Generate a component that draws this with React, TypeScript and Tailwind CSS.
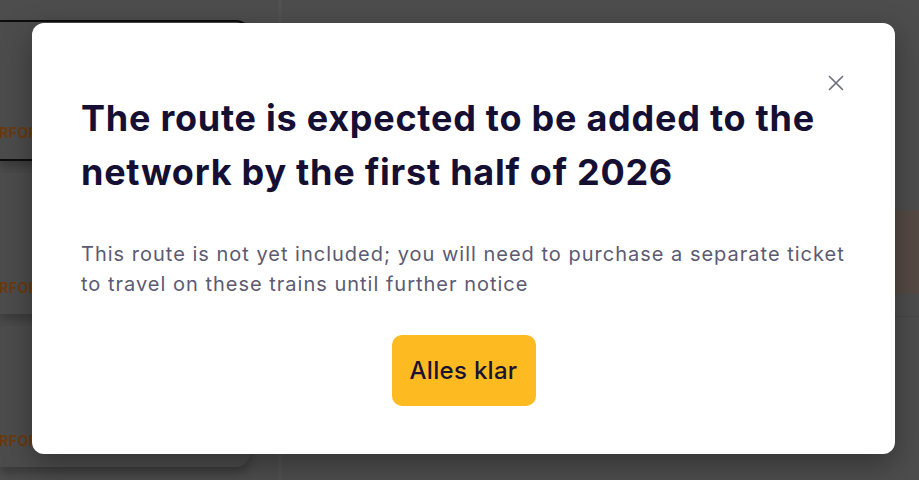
import React from "react";

function Card({ bordered }: { bordered?: boolean }) {
  return (
    <div
      className={`relative h-[141px] w-[250px] rounded-r-[14px] bg-[#989898] shadow-[0_6px_10px_rgba(0,0,0,0.25)] ${
        bordered ? "border-t-2 border-r-2 border-b-2 border-[#1a1a1a]" : ""
      }`}
    >
      <div className="absolute left-0 bottom-[16px] w-[32px] overflow-hidden">
        <div className="-ml-[19px] whitespace-nowrap text-[14px] font-bold tracking-wide text-[#d67420]">
          PERFORMANCE
        </div>
      </div>
    </div>
  );
}

export default function App() {
  return (
    <div className="relative h-[480px] w-[919px] overflow-hidden bg-[#9a9a9a] font-[Inter,sans-serif]">
      {/* underlying page */}
      <div className="flex h-full">
        <div className="flex w-[250px] flex-col gap-[12px] pt-[20px]">
          <Card bordered />
          <Card />
          <Card />
        </div>
        <div className="ml-[28px] w-[4px] bg-[#a2a2a2]" />
        <div className="flex flex-1 flex-col pt-[210px]">
          <div className="h-[84px] bg-[#aa9488]" />
          <div className="mt-[22px] border-t border-[#8e8e8e]" />
        </div>
      </div>

      {/* overlay */}
      <div className="absolute inset-0 bg-black/50" />

      {/* modal */}
      <div className="absolute left-[32px] top-[23px] w-[863px] rounded-[12px] bg-white px-[49px] pb-[48px] pt-[68px] shadow-[0_10px_30px_rgba(0,0,0,0.35)]">
        <button className="absolute right-[50px] top-[51px] flex h-[18px] w-[18px] items-center justify-center text-[#6b6a80]">
          <svg width="16" height="16" viewBox="0 0 16 16" fill="none">
            <path d="M1.5 1.5L14.5 14.5M14.5 1.5L1.5 14.5" stroke="currentColor" strokeWidth="1.6" strokeLinecap="round" />
          </svg>
        </button>
        <h2 className="whitespace-nowrap text-[36px] font-bold leading-[54px] tracking-[0.75px] text-[#140f33]">
          The route is expected to be added to the
          <br />
          network by the first half of 2026
        </h2>
        <p className="mt-[40px] whitespace-nowrap text-[20px] leading-[30px] tracking-[1px] text-[#5c5a72]">
          This route is not yet included; you will need to purchase a separate ticket
          <br />
          to travel on these trains until further notice
        </p>
        <button className="mx-auto mt-[36px] flex h-[71px] w-[144px] items-center justify-center rounded-[10px] bg-[#fdba21] text-[24px] font-medium tracking-[0.3px] text-[#1a1433]">
          Alles klar
        </button>
      </div>
    </div>
  );
}
